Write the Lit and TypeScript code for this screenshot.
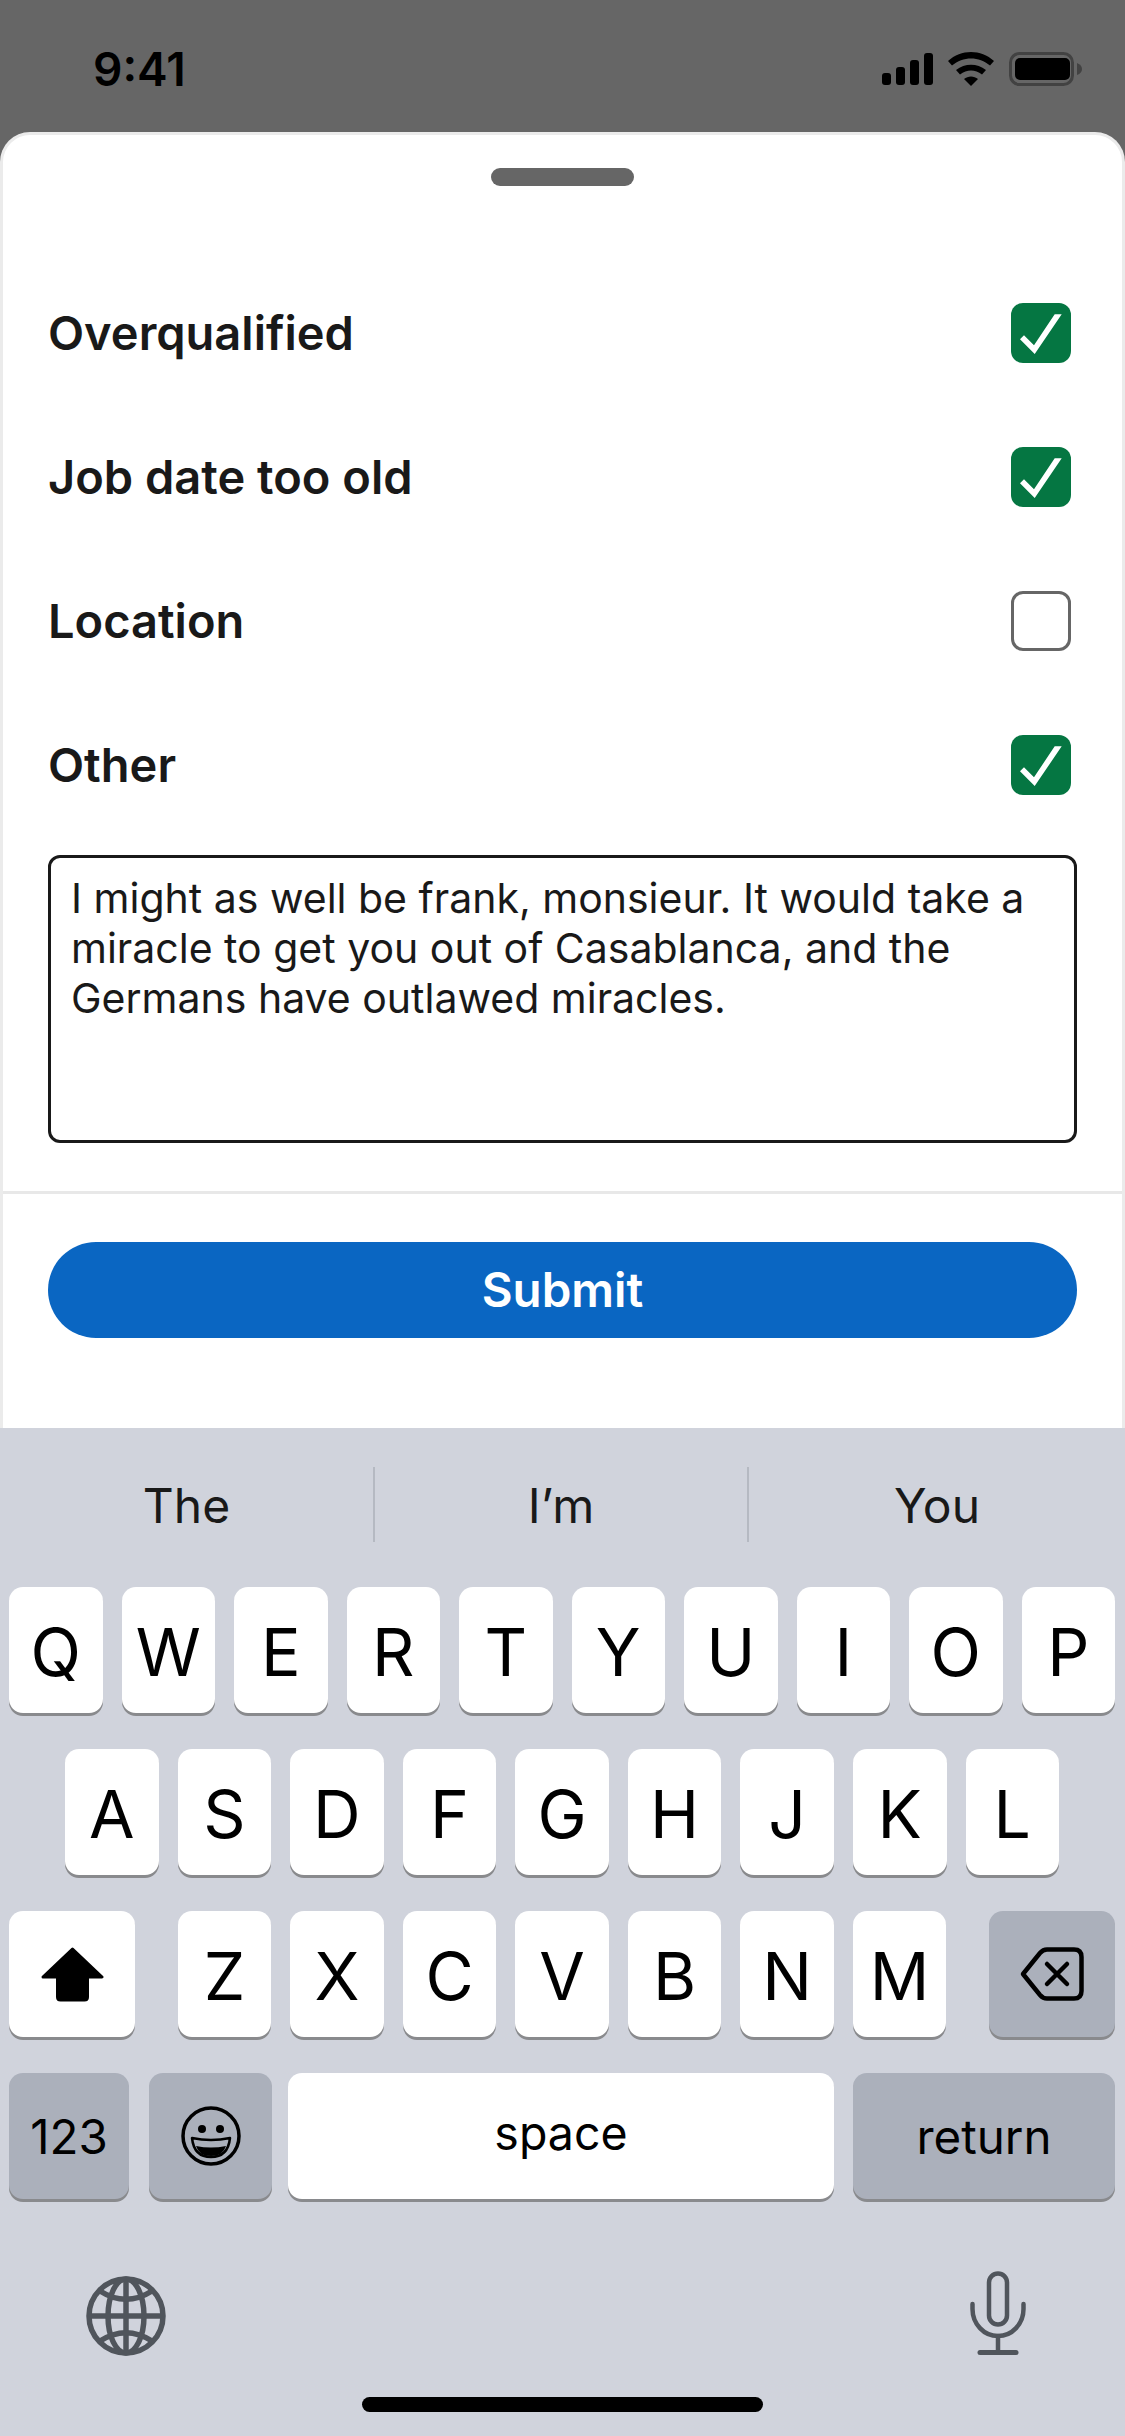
import { LitElement, html, css } from "lit";
import { customElement } from "lit/decorators.js";

const tick = html`<svg class="tick" viewBox="0 0 60 60"><polygon points="9,36.3 13,32.3 23,42.3 43.7,11.3 50.7,11.3 23.7,51" fill="#fff"/></svg>`;

@customElement("app-root")
export class AppRoot extends LitElement {
  static styles = css`
    :host { display: block; width: 1125px; height: 2436px; font-family: Inter, "Noto Sans", sans-serif; color: #191919; }
    .root { width: 1125px; height: 2436px; background: #666; display: flex; flex-direction: column; overflow: hidden; }
    .status { height: 132px; flex: none; display: flex; align-items: flex-start; justify-content: space-between; box-sizing: border-box; padding: 52px 43px 0 93px; }
    .time { font-size: 46px; line-height: 34px; font-weight: 600; color: #000; }
    .sicons { display: block; width: 200px; height: 34px; }
    .sheet { height: 1296px; flex: none; box-sizing: border-box; background: #fff; border: 3px solid #ebebeb; border-bottom: 0; border-radius: 30px 30px 0 0; display: flex; flex-direction: column; }
    .handle { width: 143px; height: 18px; border-radius: 9px; background: #666; margin: 33px auto 0; flex: none; }
    .body { padding: 75px 45px 0; display: flex; flex-direction: column; }
    .row { height: 144px; display: flex; align-items: center; justify-content: space-between; padding-right: 6px; }
    .label { font-size: 47px; font-weight: 600; color: #191919; padding-bottom: 2px; }
    .box { width: 60px; height: 60px; border-radius: 12px; box-sizing: border-box; }
    .box.on { background: #057642; }
    .box.off { border: 3px solid #666; background: #fff; }
    .tick { display: block; width: 60px; height: 60px; }
    .input { margin-top: 18px; height: 288px; box-sizing: border-box; border: 3px solid #191919; border-radius: 12px; padding: 15px 14px 0 20px; font-size: 41px; font-weight: 400; line-height: 50px; color: #191919; }
    .divider { height: 3px; background: #e8e8e8; margin-top: 48px; flex: none; }
    .foot { padding: 48px 45px 0; }
    .submit { height: 96px; border-radius: 48px; background: #0a66c2; color: #fff; display: flex; align-items: center; justify-content: center; font-size: 47.5px; font-weight: 600; padding-bottom: 2px; box-sizing: border-box; }
    .kb { flex: 1; background: #d0d3dc; display: flex; flex-direction: column; }
    .sugg { height: 159px; flex: none; box-sizing: border-box; padding: 39px 0 45px; display: grid; grid-template-columns: 373px 374px 1fr; }
    .cell { display: flex; align-items: center; justify-content: center; font-size: 48px; font-weight: 400; color: #191919; border-left: 2px solid #b5b9c2; padding-top: 1px; box-sizing: border-box; }
    .cell:first-child { border-left: 0; }
    .rows { display: flex; flex-direction: column; gap: 36px; padding: 0 10px 0 9px; }
    .krow { display: flex; gap: 19px; }
    .krow.mid { padding: 0 56px; }
    .krow.third { justify-content: space-between; gap: 0; }
    .group { display: flex; gap: 19px; }
    .key { height: 126px; width: 93.5px; flex: none; background: #fff; border-radius: 14px; box-shadow: 0 3px 0 #898a8d; display: flex; align-items: center; justify-content: center; font-size: 66px; font-weight: 400; color: #000; box-sizing: border-box; padding-top: 3px; }
    .krow.top .key, .krow.mid .key { flex: 1; width: auto; }
    .key.gray { background: #abb0bb; }
    .key.side { width: 126px; padding-top: 0; }
    .krow.bottom { gap: 0; }
    .k123 { width: 120px; font-size: 47.5px; margin-right: 20px; padding-top: 0; }
    .kemoji { width: 123px; margin-right: 16px; padding-top: 0; }
    .kspace { width: 546px; font-size: 46.5px; margin-right: 19px; padding: 0 0 6px; }
    .kreturn { width: 262px; font-size: 47.5px; padding-top: 0; }
    .tools { margin-top: 72px; height: 126px; flex: none; box-sizing: border-box; padding: 5px 99px 0 86px; display: flex; justify-content: space-between; align-items: flex-start; }
    .globe { display: block; width: 80px; height: 80px; }
    .mic { display: block; width: 56px; height: 84px; margin-top: -5px; }
    .home { width: 401px; height: 15px; border-radius: 8px; background: #000; margin: 0 auto; flex: none; }
  `;

  private keyRow(keys: string) {
    return [...keys].map((k) => html`<div class="key">${k}</div>`);
  }

  render() {
    const rows = [
      ["Overqualified", true],
      ["Job date too old", true],
      ["Location", false],
      ["Other", true],
    ] as const;
    return html`
      <div class="root">
        <div class="status">
          <div class="time">9:41</div>
          <svg class="sicons" viewBox="0 0 200 34">
            <g fill="#000">
              <rect x="0" y="21" width="9" height="12" rx="3"/>
              <rect x="14" y="15" width="9" height="18" rx="3"/>
              <rect x="28" y="8" width="9" height="25" rx="3"/>
              <rect x="42" y="1" width="9" height="32" rx="3"/>
              <path d="M66 9 C79 -3 99 -3 112 9 L108 13.500 C97 4 81 4 70 13.500Z"/>
              <path d="M74 18 C83 11 95 11 104 18 L100 22.500 C93 17 85 17 78 22.500Z"/>
              <path d="M82 27 C86 23.500 92 23.500 96 27 L89 34Z"/>
            </g>
            <rect x="128.500" y="1.500" width="62" height="31" rx="9" fill="none" stroke="#424242" stroke-width="3"/>
            <rect x="133" y="6" width="55" height="22" rx="5" fill="#000"/>
            <path d="M195 11 Q200 13 200 17 Q200 21 195 23Z" fill="#424242"/>
          </svg>
        </div>
        <div class="sheet">
          <div class="handle"></div>
          <div class="body">
            ${rows.map(([t, on]) => html`
              <div class="row">
                <div class="label">${t}</div>
                ${on ? html`<div class="box on">${tick}</div>` : html`<div class="box off"></div>`}
              </div>`)}
            <div class="input">I might as well be frank, monsieur. It would take a miracle to get you out of Casablanca, and the Germans have outlawed miracles.</div>
          </div>
          <div class="divider"></div>
          <div class="foot"><div class="submit">Submit</div></div>
        </div>
        <div class="kb">
          <div class="sugg">
            <div class="cell">The</div>
            <div class="cell">I’m</div>
            <div class="cell">You</div>
          </div>
          <div class="rows">
            <div class="krow top">${this.keyRow("QWERTYUIOP")}</div>
            <div class="krow mid">${this.keyRow("ASDFGHJKL")}</div>
            <div class="krow third">
              <div class="key side">
                <svg width="63" height="55" viewBox="0 0 63 55"><path d="M31.500 2 L61 30 H46.500 V50 Q46.500 53 43.500 53 H19.500 Q16.500 53 16.500 50 V30 H2Z" fill="#000" stroke="#000" stroke-width="3" stroke-linejoin="round"/></svg>
              </div>
              <div class="group">${this.keyRow("ZXCVBNM")}</div>
              <div class="key side gray">
                <svg width="64" height="54" viewBox="0 0 64 54" fill="none" stroke="#000" stroke-width="4.500" stroke-linecap="round" stroke-linejoin="round"><path d="M3 27 L20 6 Q23 2.500 27 2.500 H54 Q61.500 2.500 61.500 10 V44 Q61.500 51.500 54 51.500 H27 Q23 51.500 20 48 Z"/><path d="M27 17 L47 37 M47 17 L27 37"/></svg>
              </div>
            </div>
            <div class="krow bottom">
              <div class="key gray k123">123</div>
              <div class="key gray kemoji">
                <svg width="60" height="60" viewBox="0 0 60 60"><circle cx="30" cy="30" r="28" fill="none" stroke="#000" stroke-width="3.500"/><circle cx="21" cy="23" r="4" fill="#000"/><circle cx="39" cy="23" r="4" fill="#000"/><path d="M11 32 Q30 36 49 32 Q47 51 30 51 Q13 51 11 32Z" fill="none" stroke="#000" stroke-width="2.500" stroke-linejoin="round"/><path d="M15 40 Q30 43 45 40 Q42 50 30 50 Q18 50 15 40Z" fill="#000"/></svg>
              </div>
              <div class="key kspace">space</div>
              <div class="key gray kreturn">return</div>
            </div>
          </div>
          <div class="tools">
            <svg class="globe" viewBox="0 0 80 80" fill="none" stroke="#50555c" stroke-width="5.500"><circle cx="40" cy="40" r="37"/><ellipse cx="40" cy="40" rx="18" ry="37"/><path d="M40 3 V77 M3 40 H77"/><path d="M14 15 Q40 31.600 66 15"/><path d="M14 65 Q40 48.400 66 65"/></svg>
            <svg class="mic" viewBox="0 0 56 84" fill="none" stroke="#50555c" stroke-width="4.500" stroke-linecap="round"><rect x="19" y="2.500" width="18" height="51" rx="9"/><path d="M2.500 33 V38 A25.500 27 0 0 0 53.500 38 V33"/><path d="M28 65 V81"/><path d="M10 81.500 H46" stroke-width="5"/></svg>
          </div>
          <div class="home"></div>
        </div>
      </div>
    `;
  }
}
